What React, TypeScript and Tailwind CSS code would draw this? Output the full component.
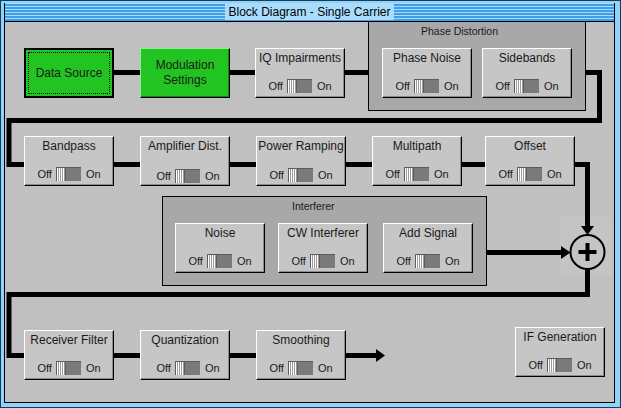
import React from "react";

type Item = { title: string; pos: string; row?: string };

const Switch = () => (
  <div className="flex items-center gap-[4px] text-[11px] leading-none text-[#1a1a1a]">
    <span>Off</span>
    <div className="flex w-[25px] h-[14px] border-t border-l border-[#5c5c5c] bg-[#7a7a7a]">
      <div className="w-[9px] h-full border-r border-[#5c5c5c] bg-[repeating-linear-gradient(90deg,#ffffff_0px,#ffffff_1px,#9c9c9c_1px,#9c9c9c_2px)]" />
    </div>
    <span className="ml-[1px]">On</span>
  </div>
);

const Block = ({ title, pos, row = "" }: Item) => (
  <div
    className={`absolute ${pos} w-[90px] h-[50px] bg-[#c6c6c6] border border-t-white border-l-white border-r-black border-b-black shadow-[inset_-1px_-1px_0_#8c8c8c] flex flex-col items-center justify-between pt-[1px] pb-[4px]`}
  >
    <div className="text-[12px] leading-[16px] text-[#1a1a1a] whitespace-nowrap">{title}</div>
    <div className={row}>
      <Switch />
    </div>
  </div>
);

const blocks: Item[] = [
  { title: "IQ Impairments", pos: "left-[250px] top-[26px]" },
  { title: "Bandpass", pos: "left-[19px] top-[114px]" },
  { title: "Amplifier Dist.", pos: "left-[135px] top-[114px]", row: "translate-x-[3px] translate-y-[2px]" },
  { title: "Power Ramping", pos: "left-[251px] top-[114px]", row: "translate-y-[1px]" },
  { title: "Multipath", pos: "left-[367px] top-[114px]" },
  { title: "Offset", pos: "left-[480px] top-[114px]" },
  { title: "Receiver Filter", pos: "left-[19px] top-[308px]" },
  { title: "Quantization", pos: "left-[135px] top-[308px]", row: "translate-x-[3px]" },
  { title: "Smoothing", pos: "left-[251px] top-[308px]" },
  { title: "IF Generation", pos: "left-[510px] top-[305px]" },
];

const phase: Item[] = [
  { title: "Phase Noise", pos: "left-[13px] top-[26px]" },
  { title: "Sidebands", pos: "left-[113px] top-[26px]" },
];

const interferer: Item[] = [
  { title: "Noise", pos: "left-[12px] top-[26px]" },
  { title: "CW Interferer", pos: "left-[115px] top-[26px]" },
  { title: "Add Signal", pos: "left-[220px] top-[26px]" },
];

export default function App() {
  return (
    <div className="w-[621px] h-[408px] bg-[#8fd3fb] border border-[#1b3a55] pt-[2px] pl-[3px] pr-[5px] pb-[4px] font-['Liberation_Sans',Arial,sans-serif]">
      <div className="w-full h-full flex flex-col border-x border-b border-black">
        <div className="h-[19px] shrink-0 border-b border-black flex justify-center bg-[repeating-linear-gradient(180deg,#a9dcfb_0px,#a9dcfb_1px,#3d9fea_1px,#3d9fea_3px)]">
          <div className="my-[1px] px-[3px] bg-[#a9dcfb] text-[12px] leading-[16px] text-black">
            Block Diagram - Single Carrier
          </div>
        </div>
        <div className="relative flex-1 bg-[#c0c0c0] overflow-hidden">
          <svg className="absolute inset-0" width="609" height="380">
            <rect x="555" y="195" width="52" height="60" fill="#c4c4c4" />
            <g fill="none" stroke="#000" strokeWidth="5" strokeLinejoin="miter">
              <polyline points="100,50.5 594.5,50.5 594.5,98.5 4,98.5 4,142.5 582.5,142.5 582.5,206" />
              <polyline points="470,230.5 558,230.5" />
              <polyline points="582.5,247.5 582.5,272.5 4,272.5 4,333.5 372,333.5" />
            </g>
            <polygon points="576,204 589,204 582.5,213" fill="#000" />
            <polygon points="556,224 556,237 565.5,230.5" fill="#000" />
            <polygon points="371,327 371,340 380,333.5" fill="#000" />
            <circle cx="582.5" cy="230" r="17" fill="none" stroke="#000" strokeWidth="2" />
            <line x1="582.5" y1="221" x2="582.5" y2="239" stroke="#000" strokeWidth="4" />
            <line x1="573.5" y1="230" x2="591.5" y2="230" stroke="#000" strokeWidth="4" />
          </svg>

          <div className="absolute left-[19px] top-[26px] w-[90px] h-[50px] bg-[#22c422] border-2 border-black outline-1 outline-dotted outline-black -outline-offset-[5px] flex items-center justify-center text-[12px] text-[#1a1a1a]">
            Data Source
          </div>
          <div className="absolute left-[135px] top-[26px] w-[90px] h-[50px] bg-[#22c422] border border-t-[#8ef08e] border-l-[#8ef08e] border-r-black border-b-black shadow-[inset_-1px_-1px_0_#128012] flex items-center justify-center text-center text-[12px] leading-[15px] text-[#1a1a1a]">
            Modulation
            <br />
            Settings
          </div>

          <div className="absolute left-[363px] -top-[1px] w-[218px] h-[90px] bg-[#a8a8a8] border border-black">
            <div className="pl-[52px] pt-[3px] text-[10.5px] leading-[13px] text-[#1a1a1a]">Phase Distortion</div>
            {phase.map((b) => (
              <Block key={b.title} {...b} />
            ))}
          </div>

          <div className="absolute left-[157px] top-[174px] w-[325px] h-[90px] bg-[#a8a8a8] border border-black">
            <div className="pl-[129px] pt-[3px] text-[10.5px] leading-[13px] text-[#1a1a1a]">Interferer</div>
            {interferer.map((b) => (
              <Block key={b.title} {...b} />
            ))}
          </div>

          {blocks.map((b) => (
            <Block key={b.title} {...b} />
          ))}
        </div>
      </div>
    </div>
  );
}
